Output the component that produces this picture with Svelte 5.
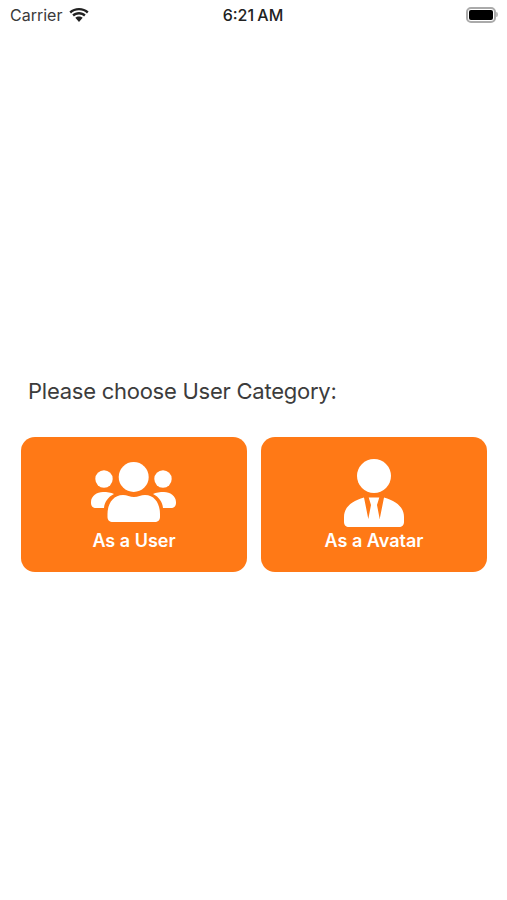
<script>
	const categories = [
		{ label: 'As a User', icon: 'group' },
		{ label: 'As a Avatar', icon: 'suit' }
	];
</script>

<div class="screen">
	<header class="status-bar">
		<div class="status-left">
			<span class="carrier">Carrier</span>
			<svg class="wifi" width="20" height="15" viewBox="0 0 20 15">
				<path d="M10 2.2c3.1 0 5.9 1.2 8 3.2l1.6-1.8C17.100 1.200 13.700 0 10 0S2.900 1.200.4 3.600L2 5.400c2.100-2 4.900-3.200 8-3.200z" fill="#222" />
				<path d="M10 6.400c2 0 3.800.8 5.100 2l1.600-1.800C15 5 12.600 4 10 4S5 5 3.300 6.600l1.600 1.800c1.300-1.200 3.100-2 5.100-2z" fill="#222" />
				<path d="M10 8.400c-1.400 0-2.700.5-3.700 1.400L10 14l3.700-4.200c-1-.9-2.300-1.400-3.700-1.400z" fill="#222" />
			</svg>
		</div>
		<span class="time">6:21 AM</span>
		<div class="battery"><span class="battery-level"></span></div>
	</header>

	<main class="content">
		<p class="prompt">Please choose User Category:</p>
		<div class="cards">
			{#each categories as { label, icon }}
				<button class="card" class:suit={icon === 'suit'}>
					{#if icon === 'group'}
						<svg width="86" height="60" viewBox="0 0 86 60" fill="#fff">
							<circle cx="42.700" cy="15" r="15" />
							<circle cx="13" cy="17" r="8.700" />
							<circle cx="72" cy="17" r="8.700" />
							<path d="M12 30c4 0 8 .5 11 2-6 3-9.500 8-10 14H5c-3 0-5-2-5-5v-1c0-6 6-10 12-10z" />
							<path d="M73 30c-4 0-8 .5-11 2 6 3 9.500 8 10 14h8c3 0 5-2 5-5v-1c0-6-6-10-12-10z" />
							<path d="M22 60c-3.500 0-5.500-2-5.500-5v-3C16.500 42 22 33 32 33c4 0 7 2 11 2s7-2 11-2c10 0 15 9 15 19v3c0 3-2 5-5.500 5z" />
						</svg>
					{:else}
						<svg width="60" height="68" viewBox="0 0 60 68" fill="#fff">
							<circle cx="30" cy="17" r="17" />
							<path
								fill-rule="evenodd"
								d="M5 68c-3 0-5-2-5-5v-5c0-10 8-16 20-19.500h20C52 42 60 48 60 58v5c0 3-2 5-5 5zM20 38.500h4.700L27 46l-2.700 14zM40 38.500h-4.700L33 46l2.700 14z"
							/>
						</svg>
					{/if}
					<span class="label">{label}</span>
				</button>
			{/each}
		</div>
	</main>
</div>

<style>
	:global(body) {
		margin: 0;
		background: #fff;
	}
	.screen {
		height: 900px;
		display: flex;
		flex-direction: column;
		overflow: hidden;
		font-family: Inter, "Liberation Sans", sans-serif;
	}
	.status-bar {
		height: 30px;
		display: grid;
		grid-template-columns: 1fr auto 1fr;
		align-items: center;
		padding: 0 10px;
		color: #222;
	}
	.status-left {
		display: flex;
		align-items: center;
		gap: 7px;
	}
	.carrier {
		font-size: 16px;
		color: #3a3a3a;
	}
	.time {
		font-size: 16px;
		font-weight: 500;
		word-spacing: -1px;
		margin-right: 1px;
	}
	.battery {
		justify-self: end;
		position: relative;
		width: 30px;
		height: 16px;
		margin-right: 1px;
		box-sizing: border-box;
		border: 2px solid #aaa;
		border-radius: 5px;
		padding: 1px;
		display: flex;
	}
	.battery::after {
		content: '';
		position: absolute;
		right: -4px;
		top: 3px;
		width: 2px;
		height: 5px;
		background: #bbb;
		border-radius: 0 2px 2px 0;
	}
	.battery-level {
		flex: 1;
		background: #000;
		border-radius: 2px;
	}
	.content {
		padding: 349px 20px 0 21px;
	}
	.prompt {
		margin: 0 0 34px 7px;
		font-size: 22px;
		line-height: 24px;
		letter-spacing: -0.25px;
		color: #3c3c3c;
	}
	.cards {
		display: grid;
		grid-template-columns: 226px 226px;
		gap: 14px;
	}
	.card {
		height: 135px;
		border: 0;
		border-radius: 14px;
		background: #ff7916;
		color: #fff;
		display: flex;
		flex-direction: column;
		align-items: center;
		justify-content: flex-end;
		padding: 0 0 20px;
		font-family: inherit;
	}
	.card svg {
		margin-bottom: 8px;
	}
	.card.suit svg {
		margin-bottom: 3px;
	}
	.label {
		font-size: 18px;
		font-weight: 600;
		line-height: 22px;
	}
</style>
